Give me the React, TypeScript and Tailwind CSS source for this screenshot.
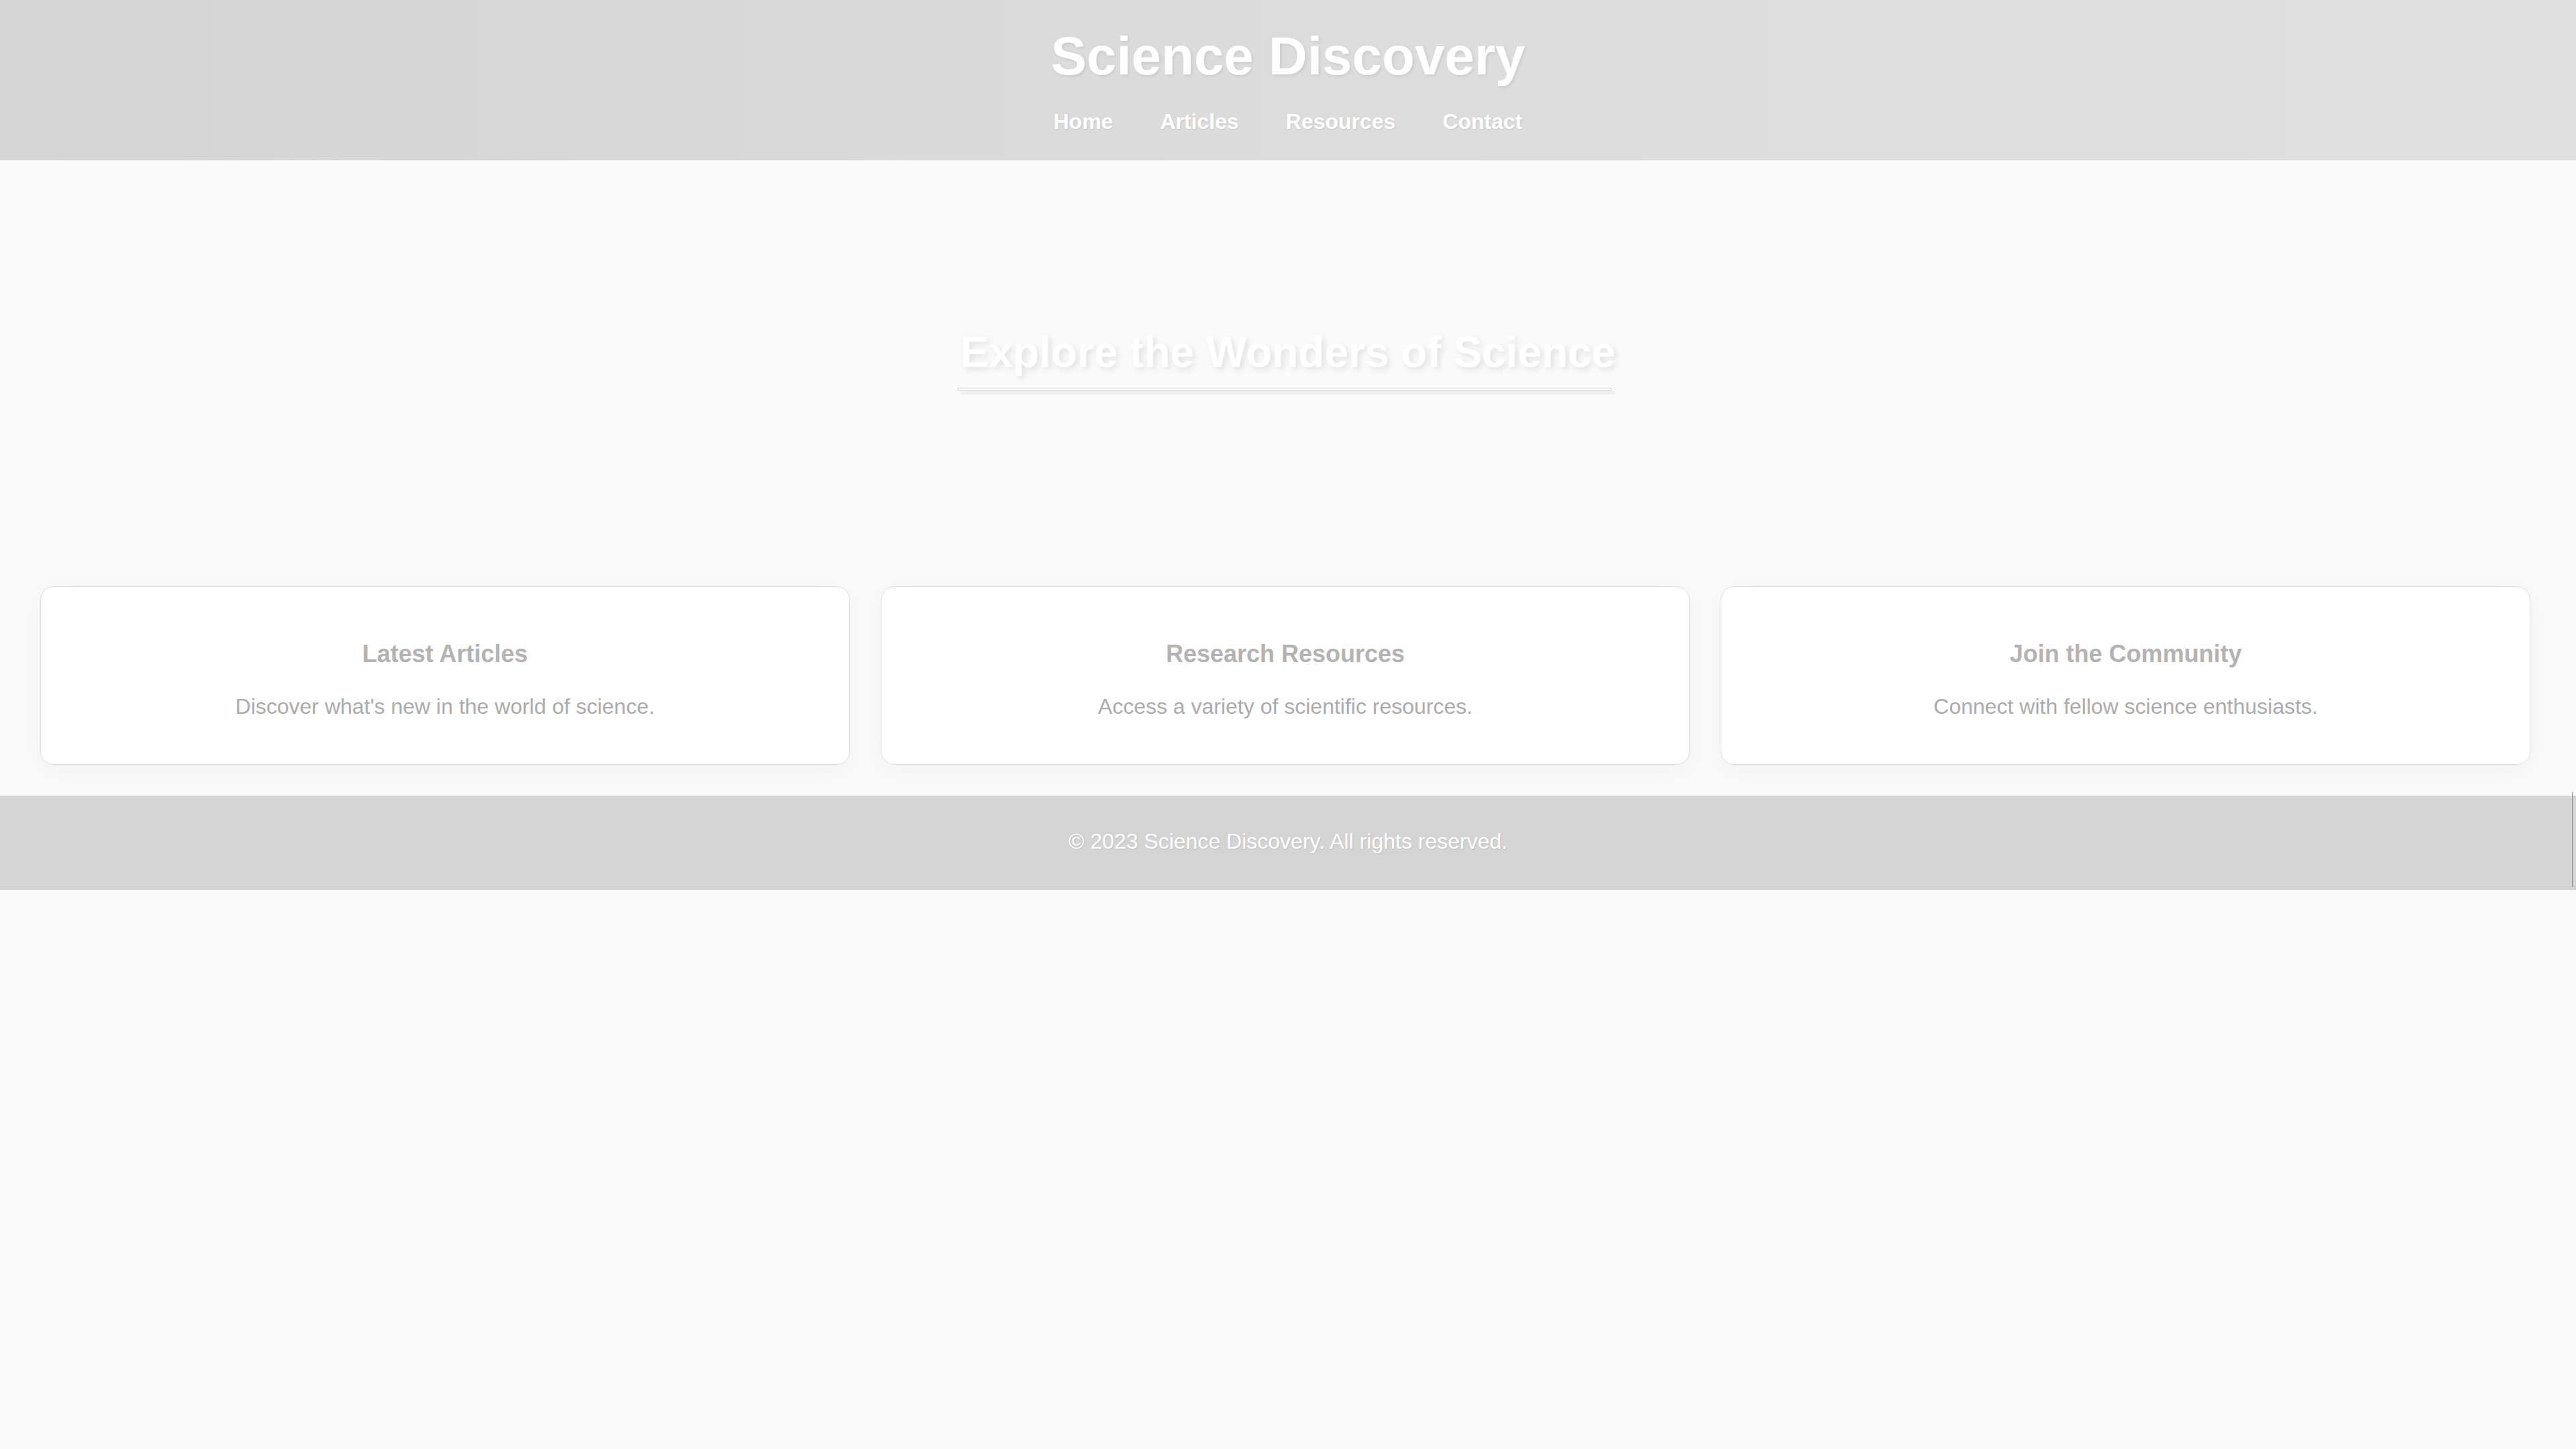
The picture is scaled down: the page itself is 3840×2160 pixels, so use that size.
import React from 'react';

const navLinks = ['Home', 'Articles', 'Resources', 'Contact'];

const cards = [
  { title: 'Latest Articles', text: "Discover what's new in the world of science." },
  { title: 'Research Resources', text: 'Access a variety of scientific resources.' },
  { title: 'Join the Community', text: 'Connect with fellow science enthusiasts.' },
];

const App: React.FC = () => {
  return (
    <div className="min-h-screen bg-[#fafafa] font-['Liberation_Sans',Arial,sans-serif]">
      {/* Header */}
      <header className="bg-gradient-to-r from-[#d4d4d4] via-[#dcdcdc] to-[#e0e0e0] pt-[38px] pb-[39px] text-center text-white">
        <h1 className="text-[80px] font-bold leading-[92px] [text-shadow:2px_2px_4px_rgba(0,0,0,0.08)]">
          Science Discovery
        </h1>
        <nav className="mt-[33px] flex justify-center gap-[70px]">
          {navLinks.map(link => (
            <a
              key={link}
              href="#"
              className="text-[32px] font-bold leading-[37px] [text-shadow:1px_1px_2px_rgba(0,0,0,0.1)]"
            >
              {link}
            </a>
          ))}
        </nav>
      </header>

      {/* Hero */}
      <section className="flex h-[591px] items-center justify-center">
        <div className="inline-flex flex-col">
          <h2 className="pt-[2px] text-[64px] font-bold leading-[74px] text-white [text-shadow:4px_4px_8px_rgba(0,0,0,0.1)]">
            Explore the Wonders of Science
          </h2>
          <div className="mt-[16px] -ml-[5px] h-[5px] w-full rounded-full border border-[#d0d0d0] bg-white shadow-[5px_5px_0_#f0f0f0]"></div>
        </div>
      </section>

      {/* Cards */}
      <section className="grid grid-cols-3 gap-[46px] pt-[44px] pb-[46px] pl-[60px] pr-[68px]">
        {cards.map(card => (
          <div
            key={card.title}
            className="rounded-[20px] border border-[#dedede] bg-white pt-[79px] pb-[67px] text-center shadow-[0_8px_32px_rgba(0,0,0,0.04)]"
          >
            <h3 className="text-[36px] font-bold leading-[41px] text-[#b3b3b3]">{card.title}</h3>
            <p className="mt-[40px] text-[32px] leading-[37px] text-[#ababab]">{card.text}</p>
          </div>
        ))}
      </section>

      {/* Footer */}
      <footer className="relative bg-[#d4d4d4] pt-[44px] pb-[49px] text-center text-white">
        <p className="text-[32px] leading-[48px] [text-shadow:1px_1px_2px_rgba(0,0,0,0.1)]">
          © 2023 Science Discovery. All rights reserved.
        </p>
        <div className="absolute -top-[5px] right-[5px] h-[141px] w-px bg-[#8c8c8c]"></div>
      </footer>
    </div>
  );
};

export default App;
